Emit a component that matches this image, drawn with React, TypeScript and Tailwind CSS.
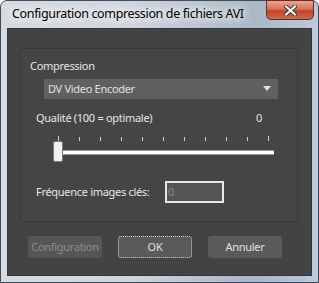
export default function App() {
  const ticks = Array.from({ length: 11 }, (_, i) => i);

  return (
    <div className="w-[319px] h-[283px] overflow-hidden bg-white">
      <div className="relative w-[319px] h-[283px] rounded-t-[7px] border border-[#3e4a57] bg-[linear-gradient(90deg,#d5dbe1_0%,#cfd6de_40%,#a9b6c4_80%,#bccadb_100%)] flex flex-col font-['Noto_Sans',sans-serif]">
        {/* title bar */}
        <div className="h-[27px] flex items-center pl-[11px]">
          <span className="text-[12.5px] text-black tracking-[-0.35px] [text-shadow:0_0_8px_#fff,0_0_12px_#fff,0_0_16px_#fff]">
            Configuration compression de fichiers AVI
          </span>
        </div>
        <div className="absolute left-[265px] top-[-1px] w-[48px] h-[20px] rounded-b-[5px] border border-[#6b2b22] bg-[linear-gradient(180deg,#e9a590_0%,#d7715a_45%,#c2412a_55%,#cf6a4c_100%)] flex items-center justify-center">
          <svg width="13" height="11" viewBox="0 0 13 11">
            <path d="M2 1.5 L11 9.5 M11 1.5 L2 9.5" stroke="#3b3b3b" strokeWidth="4" strokeLinecap="square" />
            <path d="M2 1.5 L11 9.5 M11 1.5 L2 9.5" stroke="#ffffff" strokeWidth="2" strokeLinecap="square" />
          </svg>
        </div>

        {/* client area */}
        <div className="mx-[6px] mb-[6px] flex-1 border border-[#2e3640] bg-[#434343] flex flex-col text-[11px] tracking-[-0.3px]">
          <div className="ml-[12px] mt-[19px] w-[278px] h-[174px] border border-[#383838] rounded-[2px] bg-[#454545] flex flex-col">
            <div className="ml-[9px] mt-[9px] text-[#e6e6e6] leading-[16px]">Compression</div>
            <div className="ml-[23px] mt-[5px] w-[234px] h-[20px] bg-[#606060] flex items-center justify-between pl-[4px] pr-[7px] text-[#e0e0e0]">
              <span>DV Video Encoder</span>
              <svg width="8" height="6" viewBox="0 0 8 6">
                <path d="M0 0 H8 L4 5 Z" fill="#e0e0e0" />
              </svg>
            </div>
            <div className="ml-[15px] mt-[11px] w-[226px] flex justify-between text-[#e6e6e6] leading-[16px]">
              <span>Qualité (100 = optimale)</span>
              <span>0</span>
            </div>
            {/* slider */}
            <div className="ml-[37px] mt-[10px] w-[211px] h-[5px] flex justify-between items-end">
              {ticks.map((t) => (
                <div key={t} className={`w-px bg-[#cfcfcf] ${t === 0 || t === 10 ? "h-[5px]" : "h-[4px]"}`} />
              ))}
            </div>
            <div className="relative ml-[34px] mt-[9px] w-[219px] h-[5px] border-y border-[#9a9a9a] bg-white">
              <div className="absolute left-[-2px] top-[-10px] w-[10px] h-[21px] rounded-[2px] border border-[#7a7a7a] bg-[#f2f2f2]" />
            </div>
            <div className="ml-[15px] mt-[26px] flex items-center">
              <span className="text-[#e6e6e6] w-[129px]">Fréquence images clés:</span>
              <div className="w-[59px] h-[22px] border-2 border-[#e8e8e8] bg-[#555555] text-[#8a8a8a] pl-[1px] leading-[18px]">0</div>
            </div>
          </div>

          {/* buttons */}
          <div className="mt-[14px] flex">
            <div className="ml-[20px] w-[74px] h-[22px] rounded-[3px] bg-[#565656] text-[#8c8c8c] flex items-center justify-center">Configuration</div>
            <div className="ml-[16px] w-[74px] h-[22px] rounded-[3px] bg-[#5a5a5a] text-[#e0e0e0] flex items-center justify-center border border-dotted border-[#d0d0d0]">OK</div>
            <div className="ml-[16px] w-[74px] h-[22px] rounded-[3px] bg-[#5a5a5a] text-[#e0e0e0] flex items-center justify-center">Annuler</div>
          </div>
        </div>
      </div>
    </div>
  );
}
